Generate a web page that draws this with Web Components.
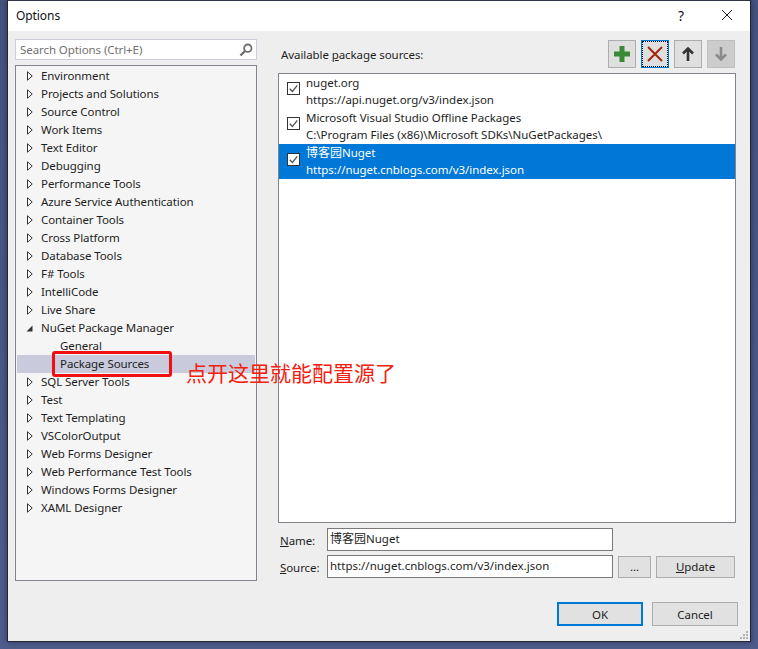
<!DOCTYPE html>
<html>
<head>
<meta charset="utf-8">
<title>Options</title>
<style>
  html, body { margin: 0; height: 100%; }
  body {
    background: linear-gradient(180deg, #46527f 0%, #4f5d8d 100%);
    font: 11.5px/17px "Noto Sans", "Noto Sans CJK SC", sans-serif;
    letter-spacing: -.08px;
    color: #1e1e1e;
    overflow: hidden;
  }
</style>
</head>
<body>
<options-dialog>
  <options-tree slot="left">
    <tree-row>Environment</tree-row>
    <tree-row>Projects and Solutions</tree-row>
    <tree-row>Source Control</tree-row>
    <tree-row>Work Items</tree-row>
    <tree-row>Text Editor</tree-row>
    <tree-row>Debugging</tree-row>
    <tree-row>Performance Tools</tree-row>
    <tree-row>Azure Service Authentication</tree-row>
    <tree-row>Container Tools</tree-row>
    <tree-row>Cross Platform</tree-row>
    <tree-row>Database Tools</tree-row>
    <tree-row>F# Tools</tree-row>
    <tree-row>IntelliCode</tree-row>
    <tree-row>Live Share</tree-row>
    <tree-row state="open">NuGet Package Manager</tree-row>
    <tree-row state="child">General</tree-row>
    <tree-row state="selected">Package Sources</tree-row>
    <tree-row>SQL Server Tools</tree-row>
    <tree-row>Test</tree-row>
    <tree-row>Text Templating</tree-row>
    <tree-row>VSColorOutput</tree-row>
    <tree-row>Web Forms Designer</tree-row>
    <tree-row>Web Performance Test Tools</tree-row>
    <tree-row>Windows Forms Designer</tree-row>
    <tree-row>XAML Designer</tree-row>
  </options-tree>
  <sources-panel slot="right">
    <source-row name="nuget.org" url="https://api.nuget.org/v3/index.json"></source-row>
    <source-row name="Microsoft Visual Studio Offline Packages" url="C:\Program Files (x86)\Microsoft SDKs\NuGetPackages\"></source-row>
    <source-row selected name="博客园Nuget" url="https://nuget.cnblogs.com/v3/index.json"></source-row>
  </sources-panel>
  <red-callout slot="overlay">点开这里就能配置源了</red-callout>
</options-dialog>

<script>
class optionsDialog extends HTMLElement {
  constructor() {
    super();
    this.attachShadow({ mode: "open" });
    this.shadowRoot.innerHTML = `
      <style>
        :host {
          display: block;
          position: relative;
          box-sizing: border-box;
          width: 744px;
          height: 642px;
          margin-left: 7px;
          background: #eeeeee;
          border: 1px solid #23262f;
          border-top-color: #2f3444;
          box-shadow: 0 0 6px rgba(20, 25, 50, .55);
        }
        .title {
          display: flex;
          align-items: center;
          box-sizing: border-box;
          height: 30px;
          padding: 0 0 2px 8px;
          background: #fff;
          color: #111;
          font-size: 12px;
        }
        .title span { flex: 1; }
        .title button {
          all: unset;
          width: 46px;
          height: 28px;
          display: flex;
          align-items: center;
          justify-content: center;
          font-size: 14px;
        }
        .main {
          display: grid;
          grid-template-columns: 242px 458px;
          column-gap: 21px;
          height: 541px;
          padding: 8px 0 0 7px;
        }
        .footer {
          display: flex;
          justify-content: flex-end;
          gap: 9px;
          padding: 22px 12px 0 0;
        }
        .grip { position: absolute; right: 1px; bottom: 1px; }
      </style>
      <div class="title">
        <span>Options</span>
        <button>?</button>
        <button>
          <svg width="12" height="12" viewBox="0 0 12 12"><path d="M1 1l10 10M11 1L1 11" stroke="#222" fill="none"/></svg>
        </button>
      </div>
      <div class="main">
        <slot name="left"></slot>
        <slot name="right"></slot>
      </div>
      <div class="footer">
        <dlg-button wide primary>OK</dlg-button>
        <dlg-button wide>Cancel</dlg-button>
      </div>
      <svg class="grip" width="10" height="10" viewBox="0 0 10 10" fill="#b4b4b4">
        <rect x="7" y="1" width="2" height="2"/><rect x="4" y="4" width="2" height="2"/><rect x="7" y="4" width="2" height="2"/>
        <rect x="1" y="7" width="2" height="2"/><rect x="4" y="7" width="2" height="2"/><rect x="7" y="7" width="2" height="2"/>
      </svg>
      <slot name="overlay"></slot>
    `;
  }
}

class optionsTree extends HTMLElement {
  constructor() {
    super();
    this.attachShadow({ mode: "open" });
    this.shadowRoot.innerHTML = `
      <style>
        :host { display: flex; flex-direction: column; gap: 5px; }
        .search {
          box-sizing: border-box;
          height: 21px;
          display: flex;
          align-items: center;
          justify-content: space-between;
          padding: 0 3px 0 4px;
          background: #fff;
          border: 1px solid #ccced9;
          color: #717171;
        }
        .search span { padding-bottom: 1px; }
        .tree {
          box-sizing: border-box;
          height: 516px;
          padding: 1px;
          background: #f5f5f5;
          border: 1px solid #82848f;
        }
      </style>
      <div class="search">
        <span>Search Options (Ctrl+E)</span>
        <svg width="14" height="14" viewBox="0 0 14 14" fill="none">
          <circle cx="8.8" cy="5.2" r="3.7" stroke="#6f6f6f" stroke-width="1.8"/>
          <path d="M6 8L1.5 12.5" stroke="#6f6f6f" stroke-width="2.4"/>
        </svg>
      </div>
      <div class="tree"><slot></slot></div>
    `;
  }
}

class treeRow extends HTMLElement {
  static observedAttributes = ["state"];

  constructor() {
    super();
    this.attachShadow({ mode: "open" });
  }

  connectedCallback() {
    this.render();
  }

  attributeChangedCallback() {
    this.render();
  }

  getArrow() {
    const state = this.getAttribute("state");
    if (state === "open") {
      return `<svg width="7" height="7" viewBox="0 0 7 7"><path d="M6.5 .5V6.5H.5z" fill="#333"/></svg>`;
    }
    if (state === "child" || state === "selected") return "";
    return `<svg width="6" height="10" viewBox="0 0 6 10"><path d="M.5 .8L5.2 5L.5 9.2z" fill="#fff" stroke="#333"/></svg>`;
  }

  render() {
    const state = this.getAttribute("state");
    const nested = state === "child" || state === "selected";
    this.shadowRoot.innerHTML = `
      <style>
        :host {
          display: flex;
          align-items: center;
          height: 18px;
          background: ${state === "selected" ? "#c9cbdc" : "transparent"};
        }
        .arrow { width: 24px; display: flex; justify-content: flex-end; padding-right: 8px; box-sizing: border-box; }
        .text { margin-left: ${nested ? 19 : 0}px; padding-bottom: 2px; white-space: nowrap; }
      </style>
      <div class="arrow">${this.getArrow()}</div>
      <div class="text"><slot></slot></div>
    `;
  }
}

class sourcesPanel extends HTMLElement {
  constructor() {
    super();
    this.attachShadow({ mode: "open" });
    this.shadowRoot.innerHTML = `
      <style>
        :host { display: block; }
        .head {
          display: flex;
          align-items: flex-start;
          height: 34px;
          padding: 1px 1px 0 3px;
          box-sizing: border-box;
        }
        .head span { flex: 1; padding-top: 6px; }
        .tools { display: flex; gap: 5px; }
        .list {
          box-sizing: border-box;
          height: 450px;
          background: #fff;
          border: 1px solid #82848f;
        }
        .fields {
          display: grid;
          grid-template-columns: 49px 286px 38px 84px;
          row-gap: 4px;
          padding-top: 5px;
          align-items: center;
        }
        .fields label { padding: 1px 0 0 2px; }
        .fields label.source { padding-top: 2px; }
        .input {
          box-sizing: border-box;
          height: 23px;
          padding: 0 2px;
          line-height: 19px;
          background: #fff;
          border: 1px solid #7a7a7a;
          white-space: nowrap;
          letter-spacing: 0;
        }
        .cjk { font-size: 12px; }
        .more, .update { margin-left: 5px; }
      </style>
      <div class="head">
        <span>Available <u>p</u>ackage sources:</span>
        <div class="tools">
          <tool-button>
            <svg width="18" height="18" viewBox="0 0 18 18"><path d="M9 1v16M1 9h16" stroke="#388a34" stroke-width="5"/></svg>
          </tool-button>
          <tool-button focused>
            <svg width="18" height="18" viewBox="0 0 18 18"><path d="M2 2l14 14M16 2L2 16" stroke="#a1260d" stroke-width="2"/></svg>
          </tool-button>
          <tool-button>
            <svg width="14" height="16" viewBox="0 0 14 16"><path d="M7 15V3M2 7.5L7 2.5L12 7.5" stroke="#333" stroke-width="2.6" fill="none"/></svg>
          </tool-button>
          <tool-button disabled>
            <svg width="14" height="16" viewBox="0 0 14 16"><path d="M7 1V13M2 8.5L7 13.5L12 8.5" stroke="#8a8a8a" stroke-width="2.6" fill="none"/></svg>
          </tool-button>
        </div>
      </div>
      <div class="list"><slot></slot></div>
      <div class="fields">
        <label><u>N</u>ame:</label>
        <div class="input"><span class="cjk">博客园</span>Nuget</div>
        <div></div><div></div>
        <label class="source"><u>S</u>ource:</label>
        <div class="input">https://nuget.cnblogs.com/v3/index.json</div>
        <dlg-button class="more">...</dlg-button>
        <dlg-button class="update"><u>U</u>pdate</dlg-button>
      </div>
    `;
  }
}

class sourceRow extends HTMLElement {
  constructor() {
    super();
    this.attachShadow({ mode: "open" });
  }

  connectedCallback() {
    const selected = this.hasAttribute("selected");
    const name = this.getAttribute("name").replace(/[\u4e00-\u9fff]+/g, (m) => `<span class="cjk">${m}</span>`);
    this.shadowRoot.innerHTML = `
      <style>
        :host {
          display: flex;
          align-items: flex-start;
          height: 35px;
          padding-left: 8px;
          letter-spacing: -.03px;
          background: ${selected ? "#0078d7" : "transparent"};
          color: ${selected ? "#fff" : "inherit"};
        }
        .box {
          box-sizing: border-box;
          width: 13px;
          height: 13px;
          margin: ${selected ? 9 : 8}px 6px 0 0;
          background: #fff;
          border: 1px solid #333;
          display: flex;
          align-items: center;
          justify-content: center;
        }
        .text { white-space: nowrap; }
        .cjk { font-size: 12px; letter-spacing: 0; }
      </style>
      <div class="box">
        <svg width="9" height="9" viewBox="0 0 10 10"><path d="M.8 5.2L3.8 8.2L9.2 1.6" stroke="#555" stroke-width="1.5" fill="none"/></svg>
      </div>
      <div class="text">
        <div>${name}</div>
        <div>${this.getAttribute("url")}</div>
      </div>
    `;
  }
}

class toolButton extends HTMLElement {
  constructor() {
    super();
    this.attachShadow({ mode: "open" });
    this.shadowRoot.innerHTML = `
      <style>
        :host {
          box-sizing: border-box;
          width: 28px;
          height: 28px;
          display: flex;
          align-items: center;
          justify-content: center;
          background: #dfdfdf;
          border: 1px solid #adadad;
        }
        :host([disabled]) { background: #cccccc; border-color: #bfbfbf; }
        :host([focused]) { border-color: #0078d7; outline: 1px dotted #111; outline-offset: -2px; }
      </style>
      <slot></slot>
    `;
  }
}

class dlgButton extends HTMLElement {
  constructor() {
    super();
    this.attachShadow({ mode: "open" });
    this.shadowRoot.innerHTML = `
      <style>
        :host {
          box-sizing: border-box;
          height: 22px;
          display: flex;
          align-items: center;
          justify-content: center;
          background: #e1e1e1;
          border: 1px solid #adadad;
        }
        :host([wide]) { width: 86px; height: 24px; }
        :host([primary]) { border: 2px solid #0078d7; }
      </style>
      <slot></slot>
    `;
  }
}

class redCallout extends HTMLElement {
  constructor() {
    super();
    this.attachShadow({ mode: "open" });
    this.shadowRoot.innerHTML = `
      <style>
        :host { display: contents; }
        .rect {
          position: absolute;
          left: 44px;
          top: 350px;
          box-sizing: border-box;
          width: 120px;
          height: 26px;
          border: 3px solid #f01010;
          border-radius: 3px;
        }
        .label {
          position: absolute;
          left: 178px;
          top: 357px;
          font-size: 21px;
          line-height: 30px;
          letter-spacing: 0;
          color: #f2200f;
          white-space: nowrap;
        }
      </style>
      <div class="rect"></div>
      <div class="label"><slot></slot></div>
    `;
  }
}

customElements.define("options-dialog", optionsDialog);
customElements.define("options-tree", optionsTree);
customElements.define("tree-row", treeRow);
customElements.define("sources-panel", sourcesPanel);
customElements.define("source-row", sourceRow);
customElements.define("tool-button", toolButton);
customElements.define("dlg-button", dlgButton);
customElements.define("red-callout", redCallout);
</script>
</body>
</html>
